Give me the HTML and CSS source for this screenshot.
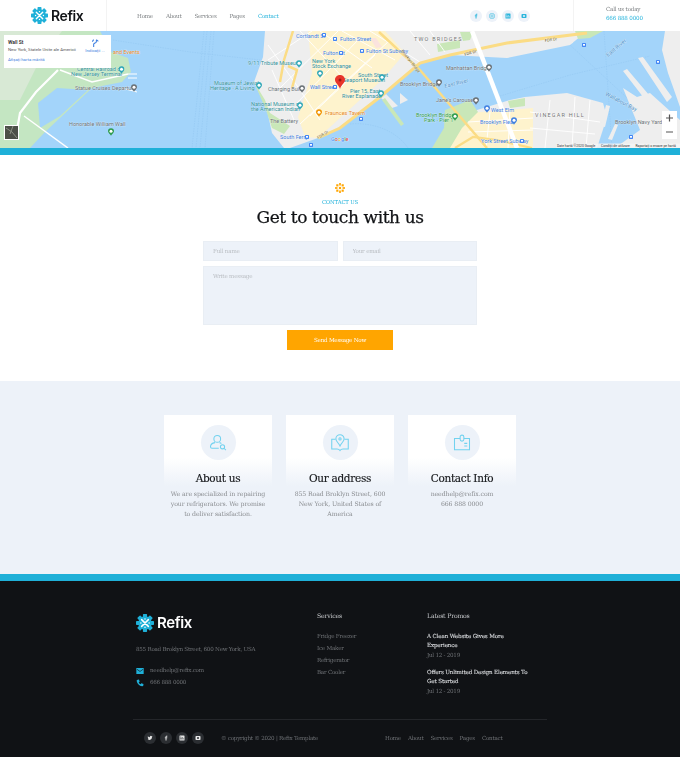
FILE: index.html
```html
<!DOCTYPE html>
<html lang="en">
<head>
<meta charset="utf-8">
<title>Contact - Refix</title>
<link rel="stylesheet" href="styles.css">
</head>
<body>
<svg class="sprites" width="0" height="0" aria-hidden="true">
  <symbol id="gear" viewBox="0 0 24 24">
    <g fill="#1fb0d8">
      <circle cx="12" cy="12" r="9"/>
      <rect x="9.2" y="0" width="5.6" height="24" rx="1"/>
      <rect x="9.2" y="0" width="5.6" height="24" rx="1" transform="rotate(45 12 12)"/>
      <rect x="9.2" y="0" width="5.6" height="24" rx="1" transform="rotate(90 12 12)"/>
      <rect x="9.2" y="0" width="5.6" height="24" rx="1" transform="rotate(135 12 12)"/>
    </g>
    <path stroke="#fff" stroke-width="2" stroke-linecap="round" d="M7.5 7.5l9 9M16.500 7.500l-9 9"/>
    <g fill="#fff"><circle cx="12" cy="6.500" r="1"/><circle cx="12" cy="17.500" r="1"/><circle cx="6.500" cy="12" r="1"/><circle cx="17.500" cy="12" r="1"/></g>
  </symbol>
  <symbol id="fb" viewBox="0 0 12 12"><path fill="currentColor" d="M7 11V6.600h1.500l.2-1.800H7V3.800c0-.5.200-.8.800-.8h1V1.400C8.500 1.300 8 1.300 7.500 1.300c-1.500 0-2.400.9-2.400 2.400v1.100H3.600v1.800h1.500V11z"/></symbol>
  <symbol id="ig" viewBox="0 0 12 12"><rect x="1.500" y="1.500" width="9" height="9" rx="2" fill="none" stroke="currentColor" stroke-width="1.200"/><circle cx="6" cy="6" r="2" fill="none" stroke="currentColor"/></symbol>
  <symbol id="li" viewBox="0 0 12 12"><path fill="currentColor" fill-rule="evenodd" d="M2 1h8a1 1 0 0 1 1 1v8a1 1 0 0 1-1 1H2a1 1 0 0 1-1-1V2a1 1 0 0 1 1-1zM3 5v4h1.200V5zm0-1.800v1.100h1.200V3.200zM5.200 5v4h1.200V6.800c0-1 1.200-1 1.200 0V9h1.200V6.500C8.800 4.800 7 4.600 6.400 5.500V5z"/></symbol>
  <symbol id="yt" viewBox="0 0 12 12"><path fill="currentColor" fill-rule="evenodd" d="M2.500 2h7A1.500 1.500 0 0 1 11 3.500v5A1.500 1.500 0 0 1 9.500 10h-7A1.500 1.500 0 0 1 1 8.500v-5A1.500 1.500 0 0 1 2.500 2zM4 4.500v3h4v-3z"/></symbol>
  <symbol id="tw" viewBox="0 0 12 12"><path fill="currentColor" d="M11 3c-.4.200-.8.300-1.200.3.400-.3.800-.7.900-1.200-.4.300-.9.400-1.300.5a2 2 0 0 0-3.500 1.900C4.200 4.400 2.800 3.600 1.800 2.400c-.5 1-.2 2.100.6 2.700-.3 0-.6-.1-.9-.3 0 1 .7 1.800 1.600 2-.3.100-.6.100-.9 0 .3.800 1 1.400 1.900 1.400A4 4 0 0 1 1 9.100c3.900 2.200 9.100-.3 9-5.200.4-.2.700-.6 1-.9z"/></symbol>
  <symbol id="pin" viewBox="0 0 8 10"><path fill="currentColor" d="M4 0a4 4 0 0 0-4 4c0 2.200 2.700 3.400 4 6 1.300-2.600 4-3.800 4-6a4 4 0 0 0-4-4z"/><circle cx="4" cy="4" r="2" fill="#fff"/></symbol>
  <symbol id="sub" viewBox="0 0 6 6"><rect width="6" height="6" rx="1" fill="#4285f4"/><rect x="1.500" y="1.500" width="3" height="2.500" fill="#fff"/></symbol>
</svg>

<header class="topbar">
  <div class="brand">
    <svg class="brand-mark"><use href="#gear"/></svg>
    <span class="brand-name">Refix</span>
  </div>
  <nav class="mainnav">
    <a href="#">Home</a><a href="#">About</a><a href="#">Services</a><a href="#">Pages</a><a href="#" class="is-active">Contact</a>
  </nav>
  <div class="socials">
    <a href="#" class="soc"><svg><use href="#fb"/></svg></a>
    <a href="#" class="soc"><svg><use href="#ig"/></svg></a>
    <a href="#" class="soc"><svg><use href="#li"/></svg></a>
    <a href="#" class="soc"><svg><use href="#yt"/></svg></a>
  </div>
  <div class="callbox"><span>Call us today</span><strong>666 888 0000</strong></div>
</header>

<section class="map">
  <svg class="map-art" viewBox="0 31 680 117" width="680" height="117">
    <rect y="31" width="680" height="117" fill="#a3d4fa"/>
    <!-- ferry routes -->
    <g fill="none" stroke="#93c8f2" stroke-width=".6" stroke-dasharray="1.500 1">
      <path d="M204 31 192 148M207 31 196 148M211 31 200 148M214 31 205 148M113 40 190 52 260 60"/>
      <path d="M500 96 570 75 650 56M555 31 640 110M604 31 612 148M350 124c20-2 45 5 58 24"/>
    </g>
    <!-- New Jersey -->
    <path fill="#c4e6c2" d="M0 31H100L111 52 128 58 131 72 122 82 92 88 45 132 30 148H0z"/>
    <path fill="#a3d4fa" d="M57 88 88 90 60 116 40 128 38 103z"/>
    <path fill="#ecece8" d="M0 31H62L40 60 20 100H0z" opacity=".5"/>
    <g fill="none" stroke="#fff">
      <path stroke-width="2.200" d="M58 70 36 92 20 113 17 130"/>
      <path stroke-width="1.500" d="M24 116 68 148M60 70 92 82 128 74"/>
      <path stroke-width="1" d="M128 74 137 74M128 78 137 78M122 88 137 92"/>
    </g>
    <!-- Manhattan -->
    <path fill="#eeeeee" d="M265 31H587L570 45 507 58 450 55 420 63 380 97 340 128 318 138 290 148H284L272 133 267 110 254 82 263 57z"/>
    <path fill="#fef3cd" d="M308 31H385L405 53 382 80 318 138 305 137 298 117 312 73z"/>
    <path fill="#c9e7b8" d="M254 82 265 100 270 113 290 126 284 134 272 128 266 110z"/>
    <path fill="#c9e7b8" d="M460 32H473L470 40 463 41zM437 44 460 40 460 48 438 52zM575 31H603L590 38 578 39z"/>
    <path fill="#fbe3de" d="M370 38H376L382 47 376 48z"/>
    <g fill="none" stroke="#fff" stroke-width=".9">
      <path d="M268 45 300 90 320 120M272 70 294 120M300 31 345 80M320 31 372 68M342 31 395 60M268 60 312 31M280 88 338 31M296 104 360 38M310 116 375 55M300 124 390 40M370 31 420 62M410 31 430 55M430 31 445 52"/>
    </g>
    <path fill="#eeeeee" d="M507 47 573 35 573 43 508 57z"/>
    <path fill="#eeeeee" d="M386 94 398 106 392 108 381 98zM400 93 408 100 400 104z"/>
    <path fill="#c9e7b8" d="M385 98 404 124 401 126 382 100z"/>
    <!-- Brooklyn -->
    <path fill="#eeeeee" d="M467 113 510 100 525 97 567 93 603 103 607 117 597 148H440z"/>
    <path fill="#fef3cd" d="M468 113 533 108 533 148H447z"/>
    <path fill="#c9e7b8" d="M445 110 470 100 478 112 462 128 450 148H432L444 128zM508 101 525 98 525 106 510 108z"/>
    <g fill="none" stroke="#fff" stroke-width=".9">
      <path d="M550 100 545 148M575 97 572 148M590 100 586 148M530 112 600 122M530 128 595 134M468 122 533 118M468 132 533 130M490 112 486 148M510 108 508 148"/>
    </g>
    <!-- Navy yard -->
    <path fill="#eeeeee" d="M665 31H680V107L673 87 668 73 662 50z"/>
    <path fill="#eeeeee" d="M638 58 643 57 672 97 667 102zM623 71 627 69 655 102 647 102zM623 88 637 97 650 93 680 120V148H615L640 130z"/>
    <path fill="#eeeeee" d="M606 105 610 106 605 127 601 126zM615 124 618 125 612 140 608 139z"/>
    <!-- highways and bridges -->
    <g fill="none" stroke="#fbdc85">
      <path stroke-width="2.500" d="M293 31 284 60 280 82M288 66 297 70 292 88"/>
      <path stroke-width="3" d="M318 138 340 128 380 97 420 63 450 55 507 43 587 33"/>
      <path stroke-width="2.500" d="M379 32 420 70 487 148"/>
      <path stroke-width="2.200" d="M455 148 473 137 497 140 532 148"/>
    </g>
    <path fill="none" stroke="#fff" stroke-width="4.500" d="M472 31 517 148"/>
    <!-- labels -->
    <g class="map-labels">
      <g class="lbl-teal">
        <text x="248" y="65">9/11 Tribute Museum</text>
        <text x="312" y="63">New York</text>
        <text x="312" y="68">Stock Exchange</text>
        <text x="214" y="85">Museum of Jewish</text>
        <text x="210" y="90">Heritage - A Living</text>
        <text x="251" y="106">National Museum of</text>
        <text x="251" y="111">the American Indian</text>
        <text x="77" y="71">Central Railroad of</text>
        <text x="71" y="76">New Jersey Terminal</text>
        <text x="358" y="77">South Street</text>
        <text x="343" y="82">Seaport Museum</text>
        <text x="350" y="93">Pier 15, East</text>
        <text x="342" y="98">River Esplanade</text>
      </g>
      <g class="lbl-gray">
        <text x="75" y="90">Statue Cruises Departure</text>
        <text x="69" y="126">Honorable William Wall</text>
        <text x="268" y="91">Charging Bull</text>
        <text x="270" y="123">The Battery</text>
        <text x="446" y="70">Manhattan Bridge</text>
        <text x="400" y="86">Brooklyn Bridge</text>
        <text x="436" y="102">Jane's Carousel</text>
        <text x="615" y="124">Brooklyn Navy Yard</text>
        <text x="414" y="41" class="lbl-area">TWO BRIDGES</text>
        <text x="535" y="117" class="lbl-area">VINEGAR HILL</text>
      </g>
      <g class="lbl-blue">
        <text x="296" y="38">Cortlandt St</text>
        <text x="340" y="41">Fulton Street</text>
        <text x="323" y="55">Fulton St</text>
        <text x="366" y="53">Fulton St Subway</text>
        <text x="310" y="89">Wall Street</text>
        <text x="280" y="139">South Ferry</text>
        <text x="480" y="124">Brooklyn Flea</text>
        <text x="481" y="143">York Street Subway</text>
        <text x="491" y="112">West Elm</text>
      </g>
      <g class="lbl-water">
        <text x="445" y="88" transform="rotate(-14 445 88)">East River</text>
        <text x="605" y="95" transform="rotate(28 605 95)">Wallabout Bay</text>
        <text x="608" y="57" transform="rotate(-40 608 57)">East River</text>
      </g>
      <g class="lbl-green">
        <text x="416" y="117">Brooklyn Bridge</text>
        <text x="424" y="122">Park - Pier 1</text>
      </g>
      <g class="lbl-orange">
        <text x="325" y="115">Fraunces Tavern</text>
        <text x="113" y="54">and Events</text>
      </g>
      <g class="lbl-road">
        <text x="465" y="56" transform="rotate(-18 465 56)">FDR Dr</text>
        <text x="545" y="42" transform="rotate(-8 545 42)">FDR Dr</text>
        <text x="318" y="139" transform="rotate(-30 318 139)">FDR Dr</text>
        <text x="401" y="51" transform="rotate(52 401 51)">Brooklyn Bridge</text>
      </g>
      <g class="lbl-google">
        <text x="331" y="141"><tspan fill="#4285f4">G</tspan><tspan fill="#ea4335">o</tspan><tspan fill="#fbbc05">o</tspan><tspan fill="#4285f4">g</tspan><tspan fill="#34a853">l</tspan><tspan fill="#ea4335">e</tspan></text>
      </g>
    </g>
    <!-- POI pins -->
    <g class="poi-teal">
      <use href="#pin" x="118.500" y="66" width="6" height="8"/><use href="#pin" x="296" y="60" width="6" height="8"/><use href="#pin" x="317" y="70" width="6" height="8"/><use href="#pin" x="256" y="82" width="6" height="8"/><use href="#pin" x="297" y="102" width="6" height="8"/><use href="#pin" x="379" y="74" width="6" height="8"/><use href="#pin" x="378" y="90" width="6" height="8"/>
    </g>
    <g class="poi-gray">
      <use href="#pin" x="131" y="84" width="6" height="8"/><use href="#pin" x="299" y="85" width="6" height="8"/><use href="#pin" x="486" y="64" width="6" height="8"/><use href="#pin" x="436" y="79" width="6" height="8"/><use href="#pin" x="473" y="97" width="6" height="8"/>
    </g>
    <g class="poi-green"><use href="#pin" x="108" y="128" width="6" height="8"/><use href="#pin" x="452" y="113" width="6" height="8"/></g>
    <g class="poi-orange"><use href="#pin" x="316" y="109" width="6" height="8"/></g>
    <g class="poi-blue"><use href="#pin" x="484" y="105" width="6" height="8"/><use href="#pin" x="511" y="117" width="6" height="8"/></g>
    <g>
      <use href="#sub" x="322" y="33" width="4" height="4"/><use href="#sub" x="333" y="37" width="4" height="4"/><use href="#sub" x="339" y="51" width="4" height="4"/><use href="#sub" x="360" y="49" width="4" height="4"/><use href="#sub" x="333" y="85" width="4" height="4"/><use href="#sub" x="305" y="135" width="4" height="4"/><use href="#sub" x="309" y="143" width="4" height="4"/><use href="#sub" x="520" y="139" width="4" height="4"/><use href="#sub" x="582" y="43" width="4" height="4"/><use href="#sub" x="656" y="60" width="4" height="4"/><use href="#sub" x="629" y="135" width="4" height="4"/><use href="#sub" x="359" y="117" width="4" height="4"/>
    </g>
    <!-- marker -->
    <path fill="#e8352b" d="M340 75c-3 0-5 2.200-5 4.800 0 3.200 3.800 5 5 9.200 1.200-4.200 5-6 5-9.200 0-2.600-2-4.800-5-4.800z"/>
    <circle cx="340" cy="80" r="1.500" fill="#9c1c14"/>
    <!-- satellite thumb -->
    <rect x="4.500" y="125.500" width="14" height="14" fill="#4c4f48" stroke="#fff"/>
    <path d="M6 128l6 4 5 6M13 126l-3 8" stroke="#8b8f83" fill="none"/>
    <!-- zoom ctrl -->
    <rect x="662" y="111" width="15" height="28" fill="#fff"/>
    <path d="M666 118h7M669.500 114.500v7M666 132h7" stroke="#555" stroke-width="1.200"/>
    <!-- legal -->
    <rect x="556" y="143.500" width="124" height="4.500" fill="#f4f4f4" opacity=".85"/>
    <g class="lbl-legal">
      <text x="557" y="147">Date hartă ©2020 Google</text>
      <text x="601" y="147">Condiții de utilizare</text>
      <text x="635.500" y="147">Raportați o eroare pe hartă</text>
    </g>
  </svg>
  <div class="place-card">
    <div class="place-main">
      <div class="place-info"><b>Wall St</b><span>New York, Statele Unite ale Americii</span></div>
      <div class="place-dir"><svg viewBox="0 0 12 12"><path d="M4 12V8c0-2 4-2 4-4V2M2 4l2-3M8 1l3 2.500" stroke="#3f7fe0" stroke-width="1.600" fill="none"/></svg><span>Indicații ...</span></div>
    </div>
    <a href="#" class="place-link">Afișați harta mărită</a>
  </div>
</section>
<div class="rule"></div>

<main class="contact">
  <svg class="flake" viewBox="0 0 12 12"><g fill="#ffa500"><rect x="5" y="0" width="2" height="3"/><rect x="5" y="9" width="2" height="3"/><rect x="0" y="5" width="3" height="2"/><rect x="9" y="5" width="3" height="2"/><rect x="1.500" y="1.500" width="2.600" height="2.600"/><rect x="7.900" y="1.500" width="2.600" height="2.600"/><rect x="1.500" y="7.900" width="2.600" height="2.600"/><rect x="7.900" y="7.900" width="2.600" height="2.600"/><rect x="4.700" y="4.700" width="2.600" height="2.600"/></g></svg>
  <p class="eyebrow">CONTACT US</p>
  <h1 class="title">Get to touch with us</h1>
  <form class="form">
    <div class="form-row">
      <input class="field" placeholder="Full name">
      <input class="field" placeholder="Your email">
    </div>
    <textarea class="field field-area" placeholder="Write message"></textarea>
    <button class="send" type="button">Send Message Now</button>
  </form>
</main>

<section class="info">
  <div class="info-grid">
    <article class="card">
      <div class="card-top">
        <span class="bubble"><svg viewBox="0 0 24 24"><circle cx="11" cy="6.500" r="4.500"/><path d="M13 19H4a2 2 0 0 1-2-2c0-3 3-5 6-5.500M14 11.500c1 .3 1.800.7 2.500 1.200"/><circle cx="18" cy="17" r="2.800"/><path d="M20 19l2.500 2.500"/></svg></span>
        <h2>About us</h2>
      </div>
      <p>We are specialized in repairing your refrigerators. We promise to deliver satisfaction.</p>
    </article>
    <article class="card">
      <div class="card-top">
        <span class="bubble"><svg viewBox="0 0 24 24"><path d="M12 1a5.500 5.500 0 0 0-5.500 5.500c0 3 3.500 5.500 5.500 9.500 2-4 5.500-6.500 5.500-9.500A5.500 5.500 0 0 0 12 1z"/><circle cx="12" cy="6.500" r="1.500"/><path d="M6 7H1v13h7c2 0 3 .5 4 2 1-1.500 2-2 4-2h7V7h-5"/></svg></span>
        <h2>Our address</h2>
      </div>
      <p>855 Road Broklyn Street, 600 New York, United States of America</p>
    </article>
    <article class="card">
      <div class="card-top">
        <span class="bubble"><svg viewBox="0 0 24 24"><path d="M9.500 6H2v15h20V6h-7.500"/><rect x="9.500" y="1.500" width="5" height="8" rx="2.500"/><path d="M15 12.500h4M15 16h4"/></svg></span>
        <h2>Contact Info</h2>
      </div>
      <p>needhelp@refix.com<br>666 888 0000</p>
    </article>
  </div>
</section>
<div class="rule"></div>

<footer class="footer">
  <div class="foot-main">
    <div class="foot-about">
      <div class="brand brand-foot">
        <svg class="brand-mark"><use href="#gear"/></svg>
        <span class="brand-name">Refix</span>
      </div>
      <p class="foot-addr">855 Road Broklyn Street, 600 New York, USA</p>
      <ul class="foot-contacts">
        <li><svg viewBox="0 0 12 12"><path fill="#1fb0d8" d="M.5 1.500h11v9H.5z"/><path fill="none" stroke="#101215" d="M1.500 3.500l4.500 3.200 4.500-3.200"/></svg>needhelp@refix.com</li>
        <li><svg viewBox="0 0 12 12"><path fill="#1fb0d8" d="M2.500 1 4.500.8 5.500 4 4 5.200c.5 1.300 1.400 2.200 2.800 2.800L8 6.500l3.200 1-.2 2.300c-.1.800-1 1.400-2 1.200C5 10.300 1.800 7 1 3c-.2-1 .5-1.900 1.500-2z"/></svg>666 888 0000</li>
      </ul>
    </div>
    <div class="foot-services">
      <h3>Services</h3>
      <ul>
        <li>Fridge Freezer</li><li>Ice Maker</li><li>Refrigerator</li><li>Bar Cooler</li>
      </ul>
    </div>
    <div class="foot-promos">
      <h3>Latest Promos</h3>
      <div class="promo"><b>A Clean Website Gives More Experience</b><span>Jul 12 - 2019</span></div>
      <div class="promo"><b>Offers Unlimited Design Elements To Get Started</b><span>Jul 12 - 2019</span></div>
    </div>
  </div>
  <div class="foot-bottom">
    <div class="foot-socials">
      <a href="#" class="dsoc"><svg><use href="#tw"/></svg></a>
      <a href="#" class="dsoc"><svg><use href="#fb"/></svg></a>
      <a href="#" class="dsoc"><svg><use href="#li"/></svg></a>
      <a href="#" class="dsoc"><svg><use href="#yt"/></svg></a>
    </div>
    <span class="copy">© copyright © 2020 | Refix Template</span>
    <nav class="foot-nav"><a href="#">Home</a><a href="#">About</a><a href="#">Services</a><a href="#">Pages</a><a href="#">Contact</a></nav>
  </div>
</footer>
</body>
</html>
```
FILE: styles.css
```css
* { box-sizing: border-box; }
html, body { margin: 0; padding: 0; }
body {
  width: 680px;
  background: #fff;
  font-family: "DejaVu Serif", "Liberation Serif", serif;
  color: #7d8083;
  overflow-x: hidden;
}
a { color: inherit; text-decoration: none; }
ul { list-style: none; margin: 0; padding: 0; }
.sprites { position: absolute; }
.topbar, .contact, .info, .footer { will-change: transform; }

.topbar {
  height: 31px;
  display: flex;
  align-items: center;
  background: #fff;
}
.brand { display: flex; align-items: center; gap: 3px; }
.topbar .brand {
  width: 107px;
  height: 31px;
  padding-left: 31px;
  border-right: 1px solid #f3f3f3;
}
.brand-mark { width: 17px; height: 17px; flex: none; }
.brand-name {
  font-family: Inter, Roboto, sans-serif;
  font-weight: 600;
  font-size: 14px;
  letter-spacing: -.4px;
  color: #121417;
}
.mainnav {
  display: flex;
  gap: 13px;
  margin-left: 30px;
  font-size: 5.6px;
  letter-spacing: -.25px;
  width: 333px;
}
.mainnav .is-active { color: #27b4dc; }
.socials { display: flex; gap: 4px; width: 103px; }
.soc {
  width: 12px; height: 12px;
  border-radius: 50%;
  background: #edf2f9;
  color: #2bb5dc;
  display: flex; align-items: center; justify-content: center;
}
.soc svg { width: 6px; height: 6px; }
.callbox {
  height: 31px;
  flex: 1;
  border-left: 1px solid #f3f3f3;
  padding: 5px 0 0 32px;
  display: flex; flex-direction: column;
  font-size: 5.6px;
  letter-spacing: -.2px;
  line-height: 9px;
  white-space: nowrap;
}
.callbox strong { color: #27b4dc; font-weight: 400; }

.map { position: relative; height: 117px; overflow: hidden; }
.map-art { display: block; font-family: Roboto, sans-serif; }
.map-labels text {
  font-size: 5.5px;
  paint-order: stroke;
  stroke: rgba(255, 255, 255, .55);
  stroke-width: .6px;
}
.lbl-teal { fill: #2f8f99; }
.lbl-gray { fill: #6a7176; }
.lbl-blue { fill: #3f7fe0; }
.lbl-water { fill: #4b8fc7; }
.lbl-green { fill: #2e9b4c; }
.lbl-orange { fill: #e8891c; }
.lbl-road { fill: #6b5a2a; }
.map-labels .lbl-road text { font-size: 4px; }
.map-labels .lbl-area { letter-spacing: 1.2px; fill: #757575; }
.poi-teal { color: #31a8b8; }
.poi-gray { color: #6a7176; }
.poi-green { color: #2e9b4c; }
.poi-orange { color: #f09300; }
.poi-blue { color: #3f7fe0; }
.lbl-legal { font-size: 3.4px; fill: #333; }
.place-card {
  position: absolute;
  left: 4px; top: 4px;
  width: 107px; height: 33px;
  background: #fff;
  padding: 4px;
  font-family: Roboto, sans-serif;
}
.place-main { display: flex; justify-content: space-between; }
.place-info { display: flex; flex-direction: column; gap: 2px; }
.place-info b { font-size: 5px; font-weight: 500; color: #222; line-height: 6px; }
.place-info span { font-size: 4.3px; color: #555; line-height: 5px; white-space: nowrap; }
.place-dir { display: flex; flex-direction: column; align-items: center; width: 22px; margin-right: 1px; }
.place-dir svg { width: 8px; height: 8px; }
.place-dir span { font-size: 4.3px; color: #3f7fe0; white-space: nowrap; margin-top: 1px; }
.place-link { display: block; margin-top: 4px; font-size: 4.3px; color: #3f7fe0; }

.rule { height: 7px; background: #1fb0d8; }

.contact {
  height: 226px;
  padding-top: 28px;
  display: flex; flex-direction: column; align-items: center;
  background: #fff;
}
.flake { width: 10px; height: 10px; flex: none; }
.eyebrow { margin: 5px 0 0; font-size: 5.4px; line-height: 9px; letter-spacing: -.2px; color: #27b4dc; }
.title {
  margin: 0;
  font-size: 17px;
  line-height: 20px;
  font-weight: 400;
  color: #101215;
  letter-spacing: -.4px;
  -webkit-text-stroke: .25px #101215;
}
.form { width: 274px; margin-top: 14px; display: flex; flex-direction: column; align-items: center; }
.form-row { display: flex; gap: 5px; width: 100%; margin-bottom: 5px; }
.field {
  display: block;
  width: 100%;
  min-width: 0;
  height: 20px;
  background: #edf2f9;
  border: 1px solid #e9eef4;
  padding: 0 9px;
  font-family: inherit;
  font-size: 5.6px;
  letter-spacing: -.2px;
  color: #8a8f95;
  outline: none;
  resize: none;
}
.field::placeholder { color: #b9bdc2; opacity: 1; }
.field-area { height: 59px; padding-top: 6px; }
.send {
  width: 106px; height: 20px;
  margin-top: 5px;
  border: 0;
  background: #ffa500;
  color: #fff;
  font-family: inherit;
  font-size: 5.6px;
  letter-spacing: -.25px;
  padding: 0;
}

.info {
  height: 193px;
  background: #edf2f9;
  padding-top: 34px;
}
.info-grid {
  display: grid;
  grid-template-columns: repeat(3, 108px);
  gap: 14px;
  justify-content: center;
}
.card { text-align: center; }
.card-top {
  background: linear-gradient(#fff 60%, #edf2f9 100%);
  padding-top: 10px;
}
.bubble {
  display: flex;
  width: 35px; height: 35px;
  margin: 0 auto;
  border-radius: 50%;
  background: #edf2f9;
  align-items: center; justify-content: center;
}
.bubble svg {
  width: 18px; height: 18px;
  fill: none;
  stroke: #72d2ef;
  stroke-width: 1.400;
}
.card h2 {
  margin: 11px 0 0;
  font-size: 10.5px;
  line-height: 15px;
  font-weight: 400;
  color: #16181b;
  letter-spacing: -.3px;
  -webkit-text-stroke: .15px #16181b;
}
.card p {
  margin: 3px 0 0;
  padding: 0 6px;
  font-size: 6.2px;
  line-height: 10px;
  color: #8a8d91;
  letter-spacing: -.1px;
}

.footer { height: 176px; background: #101215; padding: 0 133px; font-size: 5.6px; letter-spacing: -.25px; }
.foot-main { display: flex; height: 139px; padding: 29px 3px 0; border-bottom: 1px solid #24262a; width: 414px; }
.foot-about { width: 181px; }
.brand-foot { margin-top: 3px; }
.brand-foot .brand-mark { width: 18px; height: 18px; }
.brand-foot .brand-name { color: #fff; font-size: 15px; }
.foot-addr { margin: 13px 0 0; line-height: 9px; color: #6f7276; white-space: nowrap; }
.foot-contacts { margin-top: 12px; display: flex; flex-direction: column; gap: 3px; line-height: 9px; color: #6f7276; }
.foot-contacts li { display: flex; align-items: center; gap: 6px; }
.foot-contacts svg { width: 8px; height: 8px; flex: none; }
.foot-services { width: 110px; }
.foot-promos { flex: 1; }
.footer h3 { margin: 0; padding-top: 1px; font-size: 6.2px; line-height: 9px; font-weight: 400; color: #c9cbce; letter-spacing: -.2px; }
.foot-services ul { margin-top: 12px; display: flex; flex-direction: column; gap: 3px; line-height: 9px; color: #6f7276; }
.promo { display: flex; flex-direction: column; line-height: 9px; width: 101px; }
.foot-promos h3 + .promo { margin-top: 12px; }
.promo + .promo { margin-top: 8px; }
.promo b { color: #d5d7da; font-weight: 400; -webkit-text-stroke: .12px #d5d7da; letter-spacing: -.15px; }
.promo span { color: #6f7276; margin-top: 1px; }
.foot-bottom { display: flex; align-items: center; height: 36px; padding: 0 0 1px 11px; color: #6f7276; }
.foot-socials { display: flex; gap: 4px; width: 77px; }
.dsoc {
  width: 12px; height: 12px; border-radius: 50%;
  background: #2b2e32; color: #e8e8e8;
  display: flex; align-items: center; justify-content: center;
}
.dsoc svg { width: 6px; height: 6px; }
.copy { width: 164px; white-space: nowrap; }
.foot-nav { display: flex; gap: 7px; }
```
